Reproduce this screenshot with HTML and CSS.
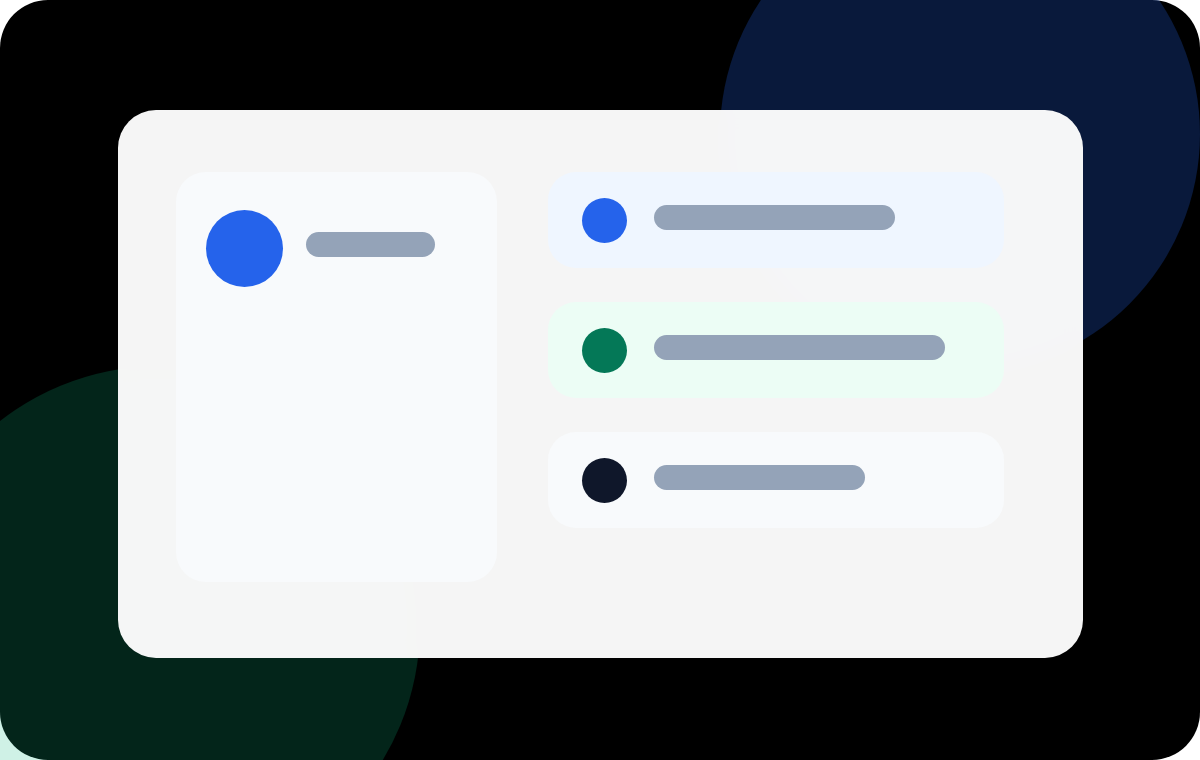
FILE: index.html
```html
<!DOCTYPE html>
<html lang="en">
<head>
<meta charset="utf-8">
<title>Preview</title>
<link rel="stylesheet" href="styles.css">
</head>
<body>
<div class="frame">
  <div class="backdrop">
    <div class="blob blob-navy"></div>
    <div class="blob blob-green"></div>
  </div>
  <div class="card">
    <div class="profile">
      <div class="profile-head">
        <div class="avatar"></div>
        <div class="bar bar-name"></div>
      </div>
    </div>
    <div class="list">
      <div class="row row-blue">
        <div class="dot dot-blue"></div>
        <div class="bar bar-row" style="width:241px"></div>
      </div>
      <div class="row row-green">
        <div class="dot dot-green"></div>
        <div class="bar bar-row" style="width:291px"></div>
      </div>
      <div class="row row-slate">
        <div class="dot dot-dark"></div>
        <div class="bar bar-row" style="width:211px"></div>
      </div>
    </div>
  </div>
</div>
</body>
</html>
```

FILE: styles.css
```css
html, body {
  margin: 0;
  padding: 0;
  background: #ffffff;
  width: 1200px;
  height: 760px;
  overflow: hidden;
}

.frame {
  position: relative;
  width: 1200px;
  height: 760px;
  box-sizing: border-box;
  background: #000000;
  border-radius: 48px;
  padding: 110px 0 0 118px;
  display: flex;
  align-items: flex-start;
}

.backdrop {
  position: absolute;
  inset: 0;
  overflow: hidden;
}

.blob {
  position: absolute;
  border-radius: 50%;
}

.blob-navy {
  left: 720px;
  top: -106px;
  width: 480px;
  height: 480px;
  background: rgba(37, 99, 235, 0.25);
}

.blob-green {
  left: -100px;
  top: 366px;
  width: 520px;
  height: 520px;
  background: rgba(16, 185, 129, 0.2);
}

.card {
  position: relative;
  z-index: 1;
  width: 965px;
  height: 548px;
  box-sizing: border-box;
  padding: 62px 0 0 58px;
  border-radius: 38px;
  background: rgba(255, 255, 255, 0.96);
  backdrop-filter: blur(10px);
  display: flex;
  align-items: flex-start;
  gap: 51px;
}

.profile {
  width: 321px;
  height: 410px;
  box-sizing: border-box;
  padding: 38px 30px;
  background: #f8fafc;
  border-radius: 30px;
}

.profile-head {
  display: flex;
  align-items: flex-start;
  gap: 23px;
}

.avatar {
  width: 77px;
  height: 77px;
  border-radius: 50%;
  background: #2563eb;
  flex: none;
}

.bar {
  height: 25px;
  border-radius: 13px;
  background: #94a3b8;
  flex: none;
}

.bar-name {
  width: 129px;
  margin-top: 22px;
}

.bar-row {
  margin-bottom: 6px;
}

.list {
  width: 456px;
  display: flex;
  flex-direction: column;
  gap: 34px;
}

.row {
  height: 96px;
  box-sizing: border-box;
  padding: 0 34px;
  border-radius: 28px;
  display: flex;
  align-items: center;
  gap: 27px;
}

.row-blue { background: #eff6ff; }
.row-green { background: #ecfdf5; }
.row-slate { background: #f8fafc; }

.dot {
  width: 45px;
  height: 45px;
  border-radius: 50%;
  flex: none;
}

.dot-blue { background: #2563eb; }
.dot-green { background: #047857; }
.dot-dark { background: #0f172a; }
```
